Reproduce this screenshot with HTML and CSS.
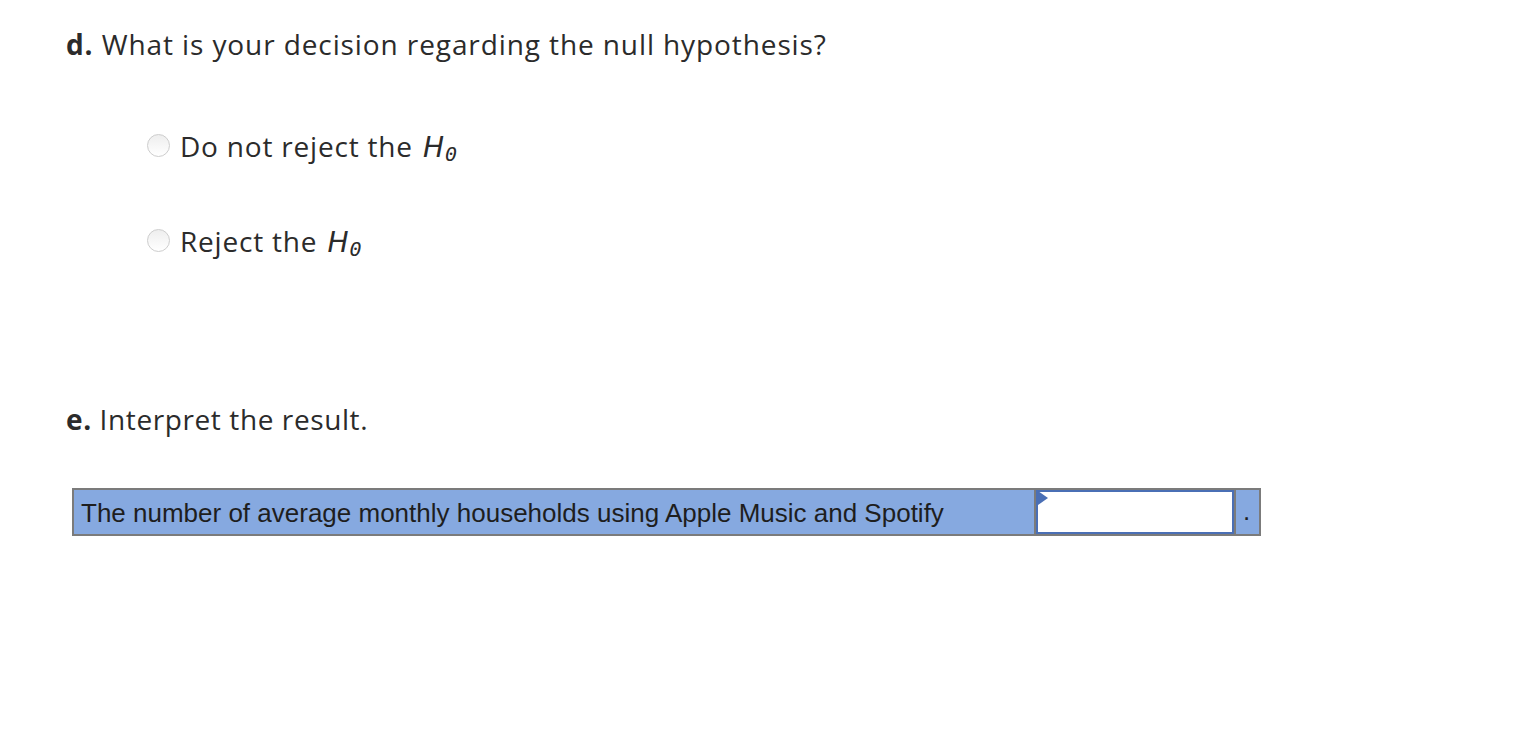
FILE: index.html
```html
<!DOCTYPE html>
<html>
<head>
<meta charset="utf-8">
<link rel="stylesheet" href="styles.css">
</head>
<body>
<div class="page">
  <p class="q q-d"><b>d.</b> What is your decision regarding the null hypothesis?</p>
  <div class="options">
    <label class="opt"><span class="radio"></span><span class="opt-text">Do not reject the <span class="math"><i>H</i><sub>0</sub></span></span></label>
    <label class="opt"><span class="radio"></span><span class="opt-text">Reject the <span class="math"><i>H</i><sub>0</sub></span></span></label>
  </div>
  <p class="q q-e"><b>e.</b> Interpret the result.</p>
  <div class="answer">
    <div class="cell text">The number of average monthly households using Apple Music and Spotify</div>
    <div class="cell input"><span class="tri"></span></div>
    <div class="cell dot">.</div>
  </div>
</div>
</body>
</html>
```
FILE: styles.css
```css
html, body { margin: 0; padding: 0; background: #fff; }
.page {
  padding: 24px 0 0 66px;
  font-family: "Open Sans", Lato, sans-serif;
  color: #2b2b2b;
}
.q { margin: 0; font-size: 28px; line-height: 40px; letter-spacing: 0.9px; }
.q b { font-weight: 700; }
.q-e { letter-spacing: 0.6px; margin-top: 136px; }
.options { padding: 62px 0 0 81px; display: flex; flex-direction: column; gap: 53px; }
.opt { display: flex; align-items: center; gap: 10px; font-size: 28px; line-height: 40px; letter-spacing: 0.8px; }
.radio {
  width: 23px; height: 23px; border-radius: 50%;
  border: 1px solid #cdcdcd;
  background: linear-gradient(#eeeeee, #ffffff);
  box-sizing: border-box;
  flex: none;
  margin-top: -4px;
}
.math { letter-spacing: 0; margin-left: 2px; }
.math i { font-family: "DejaVu Sans", sans-serif; font-style: italic; font-size: 28px; }
.math sub { font-family: "DejaVu Sans Mono", monospace; font-style: italic; font-size: 20px; vertical-align: -4px; line-height: 0; margin-left: 1px; }
.answer {
  margin: 49px 0 0 6px;
  display: flex;
  width: 1189px; height: 48px;
  box-sizing: border-box;
  border: 2px solid #7b7b7b;
  background: #86a9e0;
}
.cell { box-sizing: border-box; }
.text {
  width: 962px;
  border-right: 2px solid #7b7b7b;
  font-family: "Liberation Sans", Arial, sans-serif;
  font-size: 26px; color: #1e1e1e;
  padding: 8px 0 0 7px;
}
.input {
  position: relative;
  width: 198px;
  background: #fff;
  border: 2px solid #4a6fb5;
}
.tri {
  position: absolute; left: 0; top: -1px;
  width: 0; height: 0;
  border-top: 7px solid transparent;
  border-bottom: 7px solid transparent;
  border-left: 10px solid #4a6fb5;
}
.dot {
  flex: 1;
  border-left: 2px solid #7b7b7b;
  font-family: "Liberation Sans", Arial, sans-serif;
  font-size: 26px; color: #1e1e1e;
  padding: 6px 0 0 7px;
}
```
